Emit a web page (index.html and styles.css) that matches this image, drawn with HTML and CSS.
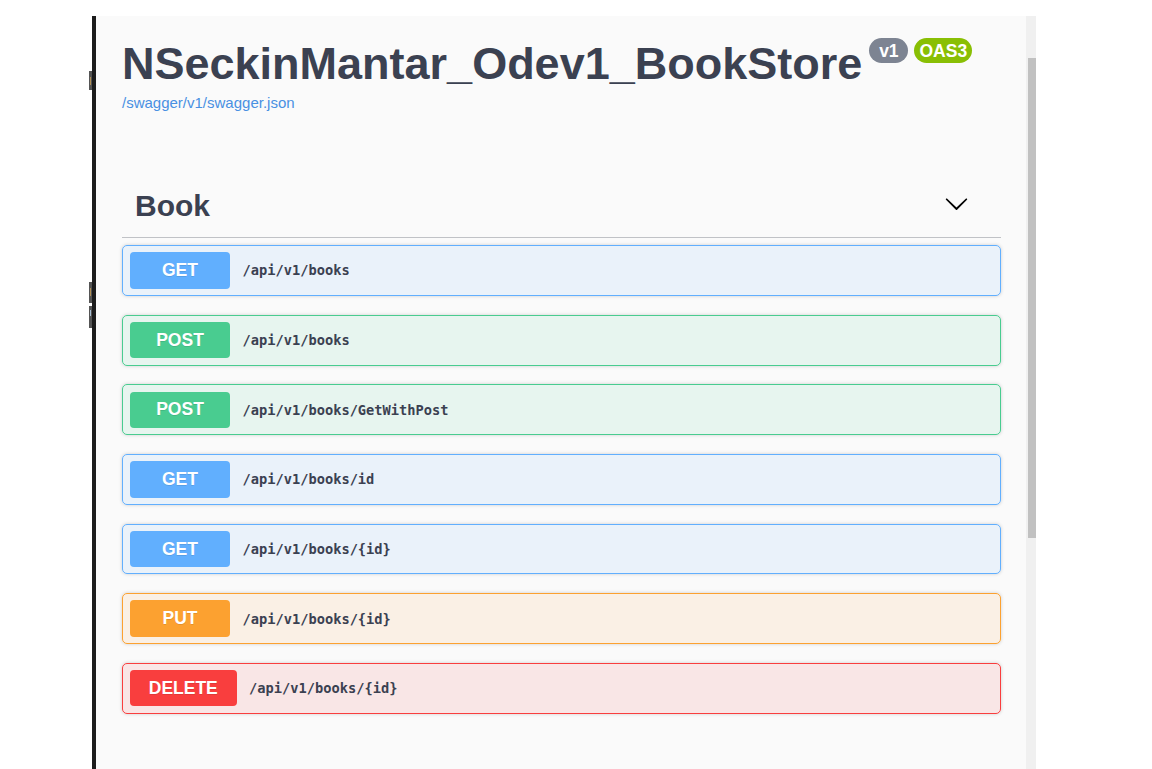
FILE: index.html
```html
<!DOCTYPE html>
<html lang="en">
<head>
<meta charset="utf-8">
<title>NSeckinMantar_Odev1_BookStore</title>
<link rel="stylesheet" href="styles.css">
</head>
<body>
<div class="page">
  <div class="stray stray-a"><span class="mark"></span></div>
  <div class="stray stray-b"><span class="mark"></span></div>
  <div class="stray stray-c"><span class="mark mark-blue"></span></div>
  <div class="frame">
    <div class="edge"></div>
    <main class="panel">
      <div class="info">
        <div class="title-row">
          <h2 class="title">NSeckinMantar_Odev1_BookStore</h2>
          <div class="stamps">
            <span class="stamp stamp-version"> v1 </span>
            <span class="stamp stamp-oas">OAS3</span>
          </div>
        </div>
        <a class="spec-link" href="#">/swagger/v1/swagger.json</a>
      </div>

      <section class="tag-section">
        <div class="tag-row">
          <h3 class="tag-name">Book</h3>
          <svg class="tag-arrow" width="25" height="25" viewBox="0 0 20 20" aria-hidden="true">
            <path d="M17.418 6.109c.272-.268.709-.268.979 0s.271.701 0 .969l-7.908 7.83c-.27.268-.707.268-.979 0l-7.908-7.83c-.27-.268-.27-.701 0-.969.271-.268.709-.268.979 0L10 13.25l7.418-7.141z"/>
          </svg>
        </div>
        <div class="ops">
          <div class="op op-get"><span class="method">GET</span><span class="path">/api/v1/books</span></div>
          <div class="op op-post"><span class="method">POST</span><span class="path">/api/v1/books</span></div>
          <div class="op op-post"><span class="method">POST</span><span class="path">/api/v1/books/GetWithPost</span></div>
          <div class="op op-get"><span class="method">GET</span><span class="path">/api/v1/books/id</span></div>
          <div class="op op-get"><span class="method">GET</span><span class="path">/api/v1/books/{id}</span></div>
          <div class="op op-put"><span class="method">PUT</span><span class="path">/api/v1/books/{id}</span></div>
          <div class="op op-delete"><span class="method">DELETE</span><span class="path">/api/v1/books/{id}</span></div>
        </div>
      </section>
    </main>
    <div class="scrollbar"><div class="thumb"></div></div>
  </div>
</div>
</body>
</html>
```

FILE: styles.css
```css
html, body {
  margin: 0;
  padding: 0;
  background: #ffffff;
  overflow: hidden;
}

.page {
  position: relative;
  height: 769px;
  box-sizing: border-box;
  padding: 16px 0 0 92px;
}

.stray {
  position: absolute;
  left: 89px;
  width: 3px;
  background: #555555;
}
.stray-a { top: 71px; height: 19px; }
.stray-b { top: 282px; height: 21px; }
.stray-c { top: 306px; height: 22px; }
.mark {
  position: absolute;
  left: 1px;
  top: 6px;
  width: 1px;
  height: 8px;
  background: #b08f55;
}
.mark-blue {
  top: 4px;
  height: 6px;
  background: #a9bfd4;
}

.frame {
  display: flex;
  height: 753px;
}

.edge {
  width: 4px;
  background: #1c1c1c;
}

.panel {
  width: 930px;
  box-sizing: border-box;
  padding: 22px 25px 0 26px;
  background: #fafafa;
  font-family: "Liberation Sans", Arial, sans-serif;
  color: #3b4151;
}

.scrollbar {
  width: 10px;
  box-sizing: border-box;
  padding: 42px 0 0 2px;
  background: #f0f0f0;
}
.thumb {
  height: 480px;
  background: #c1c1c1;
}

/* info */
.title-row {
  display: flex;
  align-items: flex-start;
}
.title {
  margin: 0;
  font-size: 45px;
  line-height: 52px;
  font-weight: 700;
  color: #3b4151;
}
.stamps {
  display: flex;
  gap: 6px;
  margin-left: 7px;
}
.stamp {
  display: inline-block;
  padding: 2.5px 5px;
  border-radius: 14px;
  font-size: 17.5px;
  line-height: 20px;
  font-weight: 700;
  color: #ffffff;
  white-space: pre;
}
.stamp-version { background: #7d8492; }
.stamp-oas { background: #89bf04; }

.spec-link {
  display: block;
  margin-top: 4px;
  font-size: 15px;
  line-height: 18px;
  color: #4990e2;
  text-decoration: none;
}

/* tag */
.tag-section {
  margin-top: 63px;
}
.tag-row {
  display: flex;
  align-items: center;
  padding: 13px 32px 14px 13px;
  border-bottom: 1px solid rgba(59, 65, 81, 0.3);
}
.tag-name {
  flex: 1;
  margin: 0;
  font-size: 30px;
  line-height: 35px;
  font-weight: 700;
  color: #3b4151;
}
.tag-arrow {
  display: block;
  fill: #000000;
  margin-bottom: 4px;
}

.ops {
  margin-top: 7px;
}

.op {
  display: flex;
  align-items: center;
  padding: 6.25px 7px;
  margin-bottom: 18.75px;
  border: 1px solid;
  border-radius: 5px;
  box-shadow: 0 0 3.75px rgba(0, 0, 0, 0.19);
}
.method {
  display: flex;
  align-items: center;
  justify-content: center;
  box-sizing: border-box;
  min-width: 100px;
  height: 36.4px;
  padding: 0 18.75px;
  border-radius: 4px;
  font-size: 17.5px;
  font-weight: 700;
  color: #ffffff;
  text-shadow: 0 1px 0 rgba(0, 0, 0, 0.1);
}
.path {
  padding-left: 12.5px;
  font-family: "DejaVu Sans Mono", "Liberation Mono", monospace;
  font-size: 13.7px;
  font-weight: 700;
  color: #3b4151;
}

.op-get { border-color: #61affe; background: rgba(97, 175, 254, 0.1); }
.op-get .method { background: #61affe; }
.op-post { border-color: #49cc90; background: rgba(73, 204, 144, 0.1); }
.op-post .method { background: #49cc90; }
.op-put { border-color: #fca130; background: rgba(252, 161, 48, 0.1); }
.op-put .method { background: #fca130; }
.op-delete { border-color: #f93e3e; background: rgba(249, 62, 62, 0.1); }
.op-delete .method { background: #f93e3e; }
```
